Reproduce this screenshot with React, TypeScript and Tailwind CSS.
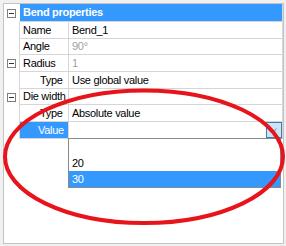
import React from "react";

function Expander() {
  return (
    <span className="relative block w-[9px] h-[9px] border border-[#7f7f7f] bg-white">
      <span className="absolute left-[1px] top-[3px] w-[5px] h-[1px] bg-[#333]" />
    </span>
  );
}

type RowProps = {
  h: string;
  expander?: boolean;
  label: string;
  indent?: boolean;
  value?: string;
  muted?: boolean;
};

function Row({ h, expander, label, indent, value, muted }: RowProps) {
  return (
    <div className={`flex ${h}`}>
      <div className="w-[15px] flex items-center pl-[3px]">{expander && <Expander />}</div>
      <div className="flex flex-1 border-l border-r border-b border-[#d6d6d6]">
        <div className={`w-[49px] border-r border-[#d6d6d6] flex items-center ${indent ? "pl-[20px]" : "pl-[3px]"}`}>
          {label}
        </div>
        <div className={`flex-1 flex items-center pl-[3px] ${muted ? "text-[#a0a0a0]" : "text-black"}`}>{value}</div>
      </div>
    </div>
  );
}

export default function App() {
  return (
    <div className="relative w-[286px] h-[246px] bg-[#f0f0f0] pt-[3px] pl-[3px]">
      <div className="w-[281px] h-[241px] border border-[#c4c4c4] bg-white font-['Liberation_Sans',Arial,sans-serif] text-[11px] tracking-[-0.3px] text-black leading-none">
        {/* header */}
        <div className="flex h-[18px]">
          <div className="w-[16px] flex items-center pl-[3px]">
            <Expander />
          </div>
          <div className="flex-1 flex flex-col border-r border-[#d6d6d6]">
            <div className="h-[17px] bg-[#3399ff] text-white font-bold flex items-center pl-[3px]">Bend properties</div>
            <div className="h-[1px] bg-[#d6d6d6] -ml-[1px]" />
          </div>
        </div>
        <Row h="h-[17px]" label="Name" value="Bend_1" />
        <Row h="h-[16px]" label="Angle" value="90°" muted />
        <Row h="h-[17px]" expander label="Radius" value="1" muted />
        <Row h="h-[17px]" label="Type" indent value="Use global value" />
        <Row h="h-[16px]" expander label="Die width" />
        <Row h="h-[17px]" label="Type" indent value="Absolute value" />
        {/* Value row with open combo */}
        <div className="flex h-[17px]">
          <div className="w-[15px]" />
          <div className="flex flex-1 border-l border-r border-[#d6d6d6]">
            <div className="w-[49px] border-r border-b border-[#d6d6d6] bg-[#3399ff] text-white flex items-center pl-[18px]">
              Value
            </div>
            <div className="relative flex-1 border-b border-[#8a8a8a] flex justify-end">
              <div className="w-[16px] h-[16px] bg-[#cce4f7] border border-[#3c7fb1] flex items-center justify-center">
                <svg width="6" height="4" viewBox="0 0 6 4">
                  <path d="M0.5 0.5 L3 3.5 L5.5 0.5" fill="none" stroke="#8a8a8a" strokeWidth="1" />
                </svg>
              </div>
              <div className="absolute left-[-1px] top-[16px] w-[213px] h-[50px] border border-[#8a8a8a] bg-white flex flex-col">
                <div className="h-[16px]" />
                <div className="h-[16px] flex items-center pl-[3px]">20</div>
                <div className="h-[16px] flex items-center pl-[3px] bg-[#3399ff] text-white">30</div>
              </div>
            </div>
          </div>
        </div>
      </div>
      <svg className="absolute inset-0 pointer-events-none" width="286" height="246" viewBox="0 0 286 246">
        <ellipse cx="144" cy="156.7" rx="139" ry="66.3" fill="none" stroke="#e8141c" strokeWidth="4" />
      </svg>
    </div>
  );
}
